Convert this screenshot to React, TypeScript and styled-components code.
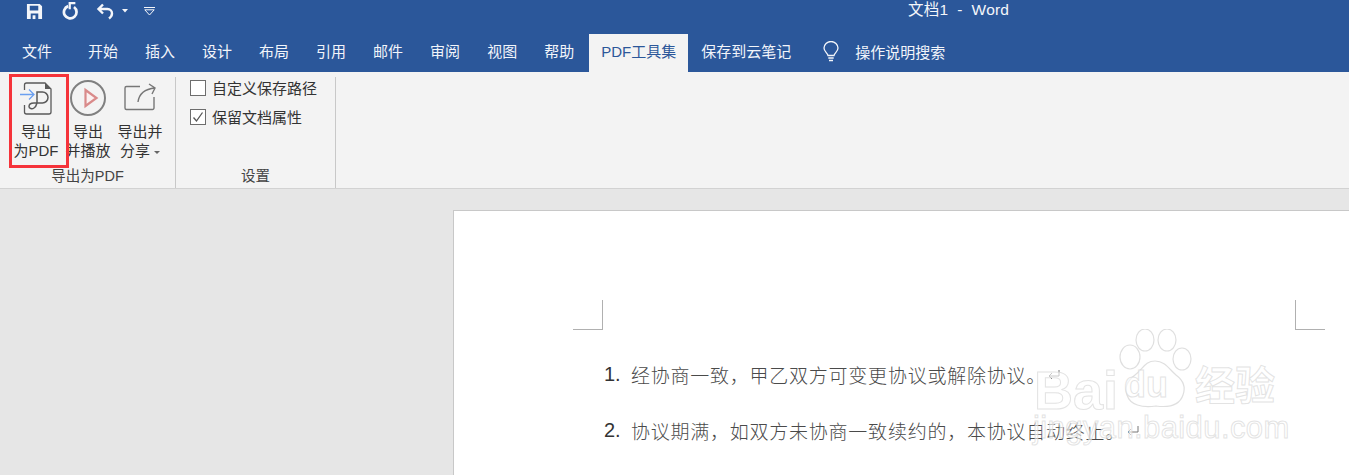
import React from "react";
import styled, { createGlobalStyle } from "styled-components";

const UI_FONT = `"Liberation Sans", "Noto Sans CJK SC", sans-serif`;

const GlobalStyle = createGlobalStyle`
  html, body {
    margin: 0;
    padding: 0;
    height: 475px;
    overflow: hidden;
    background: #e6e6e6;
  }
`;

const Wrapper = styled.div`
  width: 1349px;
  height: 475px;
  display: flex;
  flex-direction: column;
  overflow: hidden;
  font-family: ${UI_FONT};
`;

const Header = styled.header`
  background: #2b579a;
  color: #fff;
  height: 72px;
  flex-shrink: 0;
`;

const TitleBar = styled.div`
  height: 34px;
  display: flex;
  align-items: flex-start;
`;

const QuickAccess = styled.div`
  width: 908px;
  padding: 2px 0 0 26px;
  box-sizing: border-box;
  display: flex;
  align-items: center;
`;

const QuickIcon = styled.svg<{ $gap: number }>`
  display: block;
  margin-right: ${({ $gap }) => $gap}px;
  flex-shrink: 0;
`;

const DocTitle = styled.div`
  font-size: 15.5px;
  line-height: 20px;
  letter-spacing: 0.2px;
  white-space: pre;
  color: #f4f6fa;
`;

const TabRow = styled.nav`
  height: 38px;
  display: flex;
  gap: 3px;
  padding-left: 10px;
`;

const Tab = styled.div<{ $active?: boolean; $file?: boolean; $shift?: number }>`
  padding: 0 12px;
  height: 38px;
  line-height: 35px;
  font-size: 15px;
  white-space: nowrap;
  color: ${({ $active }) => ($active ? "#2b579a" : "#f2f5fa")};
  background: ${({ $active }) => ($active ? "#f3f3f3" : "transparent")};
  margin-right: ${({ $file }) => ($file ? "9px" : "0")};
  margin-left: ${({ $shift }) => $shift ?? 0}px;
`;

const SearchHint = styled.div`
  display: flex;
  align-items: center;
  gap: 16px;
  margin-left: 17px;
  height: 35px;
  font-size: 15px;
  color: #f2f5fa;
`;

const Ribbon = styled.section`
  height: 116px;
  flex-shrink: 0;
  background: #f3f3f3;
  border-bottom: 1px solid #d2d2d2;
  display: flex;
  box-sizing: content-box;
`;

const Group = styled.div<{ $width: number }>`
  width: ${({ $width }) => $width}px;
  box-sizing: border-box;
  height: 111px;
  margin-top: 5px;
  border-right: 1px solid #c8c8c8;
  display: flex;
  flex-direction: column;
  position: relative;
`;

const GroupBody = styled.div`
  flex: 1;
  display: flex;
`;

const GroupLabel = styled.div`
  height: 22px;
  margin-bottom: 1px;
  line-height: 22px;
  text-align: center;
  font-size: 14.5px;
  color: #444;
`;

const ButtonRow = styled.div`
  display: flex;
  padding-left: 10px;
`;

const BigButton = styled.div`
  width: 52px;
  display: flex;
  flex-direction: column;
  align-items: center;
  padding-top: 2px;
  font-size: 15px;
  line-height: 19px;
  color: #333;
  white-space: nowrap;
`;

const ButtonIcon = styled.svg`
  display: block;
  height: 38px;
  margin-bottom: 5px;
`;

const Caret = styled.span`
  display: inline-block;
  width: 0;
  height: 0;
  margin-left: 4px;
  vertical-align: 2px;
  border-left: 3px solid transparent;
  border-right: 3px solid transparent;
  border-top: 3px solid #666;
`;

const Highlight = styled.div`
  position: absolute;
  left: 9px;
  top: -3px;
  width: 60px;
  height: 94px;
  box-sizing: border-box;
  border: 3px solid #f5333a;
`;

const Options = styled.div`
  display: flex;
  flex-direction: column;
  gap: 9px;
  padding: 0 0 0 14px;
`;

const Option = styled.label`
  display: flex;
  align-items: center;
  gap: 6px;
  height: 20px;
  font-size: 15px;
  color: #333;
  white-space: nowrap;
`;

const CheckBox = styled.span`
  width: 16px;
  height: 16px;
  margin-top: 2px;
  box-sizing: border-box;
  border: 1px solid #6d6d6d;
  background: #fff;
  display: flex;
  align-items: center;
  justify-content: center;
  flex-shrink: 0;
`;

const Workspace = styled.main`
  flex: 1;
  padding: 21px 0 0 453px;
  background: #e6e6e6;
  min-height: 0;
`;

const Page = styled.article`
  position: relative;
  height: 320px;
  box-sizing: border-box;
  background: #fff;
  border: 1px solid #c8c8c8;
  border-right: none;
  padding: 89px 24px 0 119px;
`;

const Marks = styled.div`
  display: flex;
  justify-content: space-between;
  margin-bottom: 31px;
`;

const CropMark = styled.div<{ $side: "left" | "right" }>`
  width: 30px;
  height: 30px;
  box-sizing: border-box;
  border-bottom: 1px solid #b0b0b0;
  ${({ $side }) => ($side === "left" ? "border-right" : "border-left")}: 1px solid #b0b0b0;
`;

const List = styled.ol`
  list-style: none;
  margin: 0;
  padding: 0 0 0 31px;
  display: flex;
  flex-direction: column;
  gap: 29px;
`;

const ListItem = styled.li`
  display: flex;
  align-items: center;
  height: 27px;
  white-space: nowrap;
  color: #4a4a4a;
`;

const Num = styled.span`
  width: 27px;
  font-size: 20px;
  color: #333;
  font-family: "Liberation Sans", sans-serif;
`;

const Body = styled.span`
  font-family: "Noto Sans CJK SC", sans-serif;
  font-size: 19px;
  font-weight: 300;
  letter-spacing: 0.76px;
`;

const ReturnMark = styled.svg`
  margin-left: 2px;
  flex-shrink: 0;
`;

const Watermark = styled.div`
  position: absolute;
  left: 578px;
  top: 118px;
  width: 250px;
  height: 118px;
  pointer-events: none;
`;

const outlineText = `
  position: absolute;
  color: rgba(255, 255, 255, 0.6);
  -webkit-text-stroke: 1px rgba(215, 215, 215, 0.7);
  white-space: nowrap;
`;

const MarkWord = styled.span<{ $x: number; $y: number; $size: number }>`
  ${outlineText}
  left: ${({ $x }) => $x}px;
  top: ${({ $y }) => $y}px;
  font-size: ${({ $size }) => $size}px;
  line-height: 1;
  font-weight: 700;
`;

const MarkLink = styled.span`
  ${outlineText}
  left: 1px;
  top: 83px;
  font-size: 31px;
  line-height: 1;
  letter-spacing: 0.4px;
`;

const MarkPaw = styled.svg`
  position: absolute;
  left: 85px;
  top: 0;
`;

const tabs = ["开始", "插入", "设计", "布局", "引用", "邮件", "审阅", "视图", "帮助"];

export default function App() {
  return (
    <Wrapper>
      <GlobalStyle />
      <Header>
        <TitleBar>
          <QuickAccess>
            <QuickIcon $gap={18} width="17" height="17" viewBox="0 0 18 18">
              <path fill="#f4f6fa" d="M1 1h13.5L17 3.500V17H1z" />
              <path fill="#2b579a" d="M4 3h9v5H4zM5 11h8v6H5z" />
              <path fill="#f4f6fa" d="M7 13h3v4H7z" />
            </QuickIcon>
            <QuickIcon $gap={18} width="17" height="18" viewBox="0 0 18 20">
              <path
                fill="none"
                stroke="#f4f6fa"
                strokeWidth="3"
                d="M7.500 4.600A7 7 0 1 0 14 5.600"
              />
              <path fill="#f4f6fa" d="M8 0h7.500v2.500H10.500V8H8z" />
            </QuickIcon>
            <QuickIcon $gap={7} width="19" height="18" viewBox="0 0 19 18">
              <path
                fill="none"
                stroke="#f4f6fa"
                strokeWidth="2.4"
                d="M7 2.500 2.500 7 7 11.500M3 7h8.500a4.500 4.500 0 0 1 4.500 4.500c0 2-1 3.500-3 5"
              />
            </QuickIcon>
            <QuickIcon $gap={16} width="6" height="4" viewBox="0 0 6 4">
              <path fill="#f4f6fa" d="M0 0h6L3 3.500z" />
            </QuickIcon>
            <QuickIcon $gap={0} width="11" height="9" viewBox="0 0 11 9">
              <path fill="#f4f6fa" d="M0 0h11v1H0z" />
              <path fill="none" stroke="#f4f6fa" d="M.8 2.800 5.500 8l4.700-5.200z" />
            </QuickIcon>
          </QuickAccess>
          <DocTitle>{"文档1  -  Word"}</DocTitle>
        </TitleBar>
        <TabRow>
          <Tab $file>文件</Tab>
          {tabs.map((t) => (
            <Tab key={t}>{t}</Tab>
          ))}
          <Tab $active>PDF工具集</Tab>
          <Tab $shift={-2}>保存到云笔记</Tab>
          <SearchHint>
            <svg width="16" height="22" viewBox="0 0 16 22">
              <path
                fill="none"
                stroke="#f4f6fa"
                strokeWidth="1.3"
                d="M5 14.500C4.500 12 1 10.500 1 7a7 6.500 0 0 1 14 0c0 3.500-3.500 5-4 7.500z"
              />
              <path
                fill="none"
                stroke="#f4f6fa"
                strokeWidth="1.3"
                d="M5.300 17h5.400M6 19.500h4"
              />
            </svg>
            操作说明搜索
          </SearchHint>
        </TabRow>
      </Header>

      <Ribbon>
        <Group $width={176}>
          <GroupBody>
            <ButtonRow>
              <BigButton>
                <ButtonIcon width="32" viewBox="0 0 32 38">
                  <path
                    fill="none"
                    stroke="#5a5a5a"
                    strokeWidth="1.3"
                    d="M4.500 11V6a2 2 0 0 1 2-2H25l6 6v23a2 2 0 0 1-2 2H6.500a2 2 0 0 1-2-2v-7"
                  />
                  <path fill="#5a5a5a" d="M25 4v6h6z" />
                  <path
                    fill="none"
                    stroke="#5a5a5a"
                    strokeWidth="1.5"
                    d="M17 24V13h5.500a5.500 5.500 0 0 1 0 11H14c-3 0-5 1.500-5 3.500s3 3 5 1.500c1.500-1 2.500-3 3-5"
                  />
                  <path
                    fill="none"
                    stroke="#6a9ff0"
                    strokeWidth="1.3"
                    d="M0 15.500h14M9 10.500l5 5-5 5"
                  />
                </ButtonIcon>
                <span>导出</span>
                <span>为PDF</span>
              </BigButton>
              <BigButton>
                <ButtonIcon width="38" viewBox="0 0 38 38">
                  <circle cx="19" cy="19" r="17" fill="none" stroke="#808080" strokeWidth="2" />
                  <path
                    fill="#fbf0f0"
                    stroke="#d98a8a"
                    strokeWidth="2.2"
                    d="M16.500 11 27.500 19 16.500 27z"
                  />
                </ButtonIcon>
                <span>导出</span>
                <span>并播放</span>
              </BigButton>
              <BigButton>
                <ButtonIcon width="34" viewBox="0 0 34 38">
                  <path
                    fill="none"
                    stroke="#777"
                    strokeWidth="1.4"
                    d="M17 7.500H3.500A1.500 1.500 0 0 0 2 9v20a1.500 1.500 0 0 0 1.500 1.500h26A1.500 1.500 0 0 0 31 29V18"
                  />
                  <path
                    fill="none"
                    stroke="#777"
                    strokeWidth="1.4"
                    d="M15 23c1-8 7-13 17-14M26 5l6 4-3 6"
                  />
                </ButtonIcon>
                <span>导出并</span>
                <span>
                  分享
                  <Caret />
                </span>
              </BigButton>
            </ButtonRow>
          </GroupBody>
          <GroupLabel>导出为PDF</GroupLabel>
          <Highlight />
        </Group>
        <Group $width={160}>
          <GroupBody>
            <Options>
              <Option>
                <CheckBox />
                自定义保存路径
              </Option>
              <Option>
                <CheckBox>
                  <svg width="12" height="12" viewBox="0 0 12 12">
                    <path fill="none" stroke="#555" strokeWidth="1.3" d="M1.500 6.500 4.500 10 10.500 1.500" />
                  </svg>
                </CheckBox>
                保留文档属性
              </Option>
            </Options>
          </GroupBody>
          <GroupLabel>设置</GroupLabel>
        </Group>
      </Ribbon>

      <Workspace>
        <Page>
          <Marks>
            <CropMark $side="left" />
            <CropMark $side="right" />
          </Marks>
          <List>
            <ListItem>
              <Num>1.</Num>
              <Body>经协商一致，甲乙双方可变更协议或解除协议。</Body>
              <ReturnMark width="12" height="12" viewBox="0 0 12 12">
                <path fill="none" stroke="#777" d="M11 1v6H1M4 4 1 7l3 3" />
              </ReturnMark>
            </ListItem>
            <ListItem>
              <Num>2.</Num>
              <Body>协议期满，如双方未协商一致续约的，本协议自动终止。</Body>
              <ReturnMark width="12" height="12" viewBox="0 0 12 12">
                <path fill="none" stroke="#777" d="M11 1v6H1M4 4 1 7l3 3" />
              </ReturnMark>
            </ListItem>
          </List>
          <Watermark>
            <MarkWord $x={2} $y={34} $size={54}>Bai</MarkWord>
            <MarkPaw width="76" height="82" viewBox="0 0 76 82">
              <g fill="rgba(255,255,255,0.45)" stroke="rgba(215,215,215,0.8)" strokeWidth="1.2">
                <ellipse cx="13" cy="28" rx="10" ry="12" />
                <ellipse cx="28" cy="11" rx="9" ry="11" />
                <ellipse cx="50" cy="11" rx="9" ry="11" />
                <ellipse cx="65" cy="30" rx="9" ry="11" />
                <path d="M38 32c10 0 14 8 21 14 8 6 10 12 7 20-3 9-12 13-27 11-14 2-26-1-29-11-3-8 0-14 8-20 8-6 10-14 20-14z" />
              </g>
            </MarkPaw>
            <MarkWord $x={92} $y={38} $size={36}>du</MarkWord>
            <MarkWord $x={163} $y={37} $size={40}>经验</MarkWord>
            <MarkLink>jingyan.baidu.com</MarkLink>
          </Watermark>
        </Page>
      </Workspace>
    </Wrapper>
  );
}
